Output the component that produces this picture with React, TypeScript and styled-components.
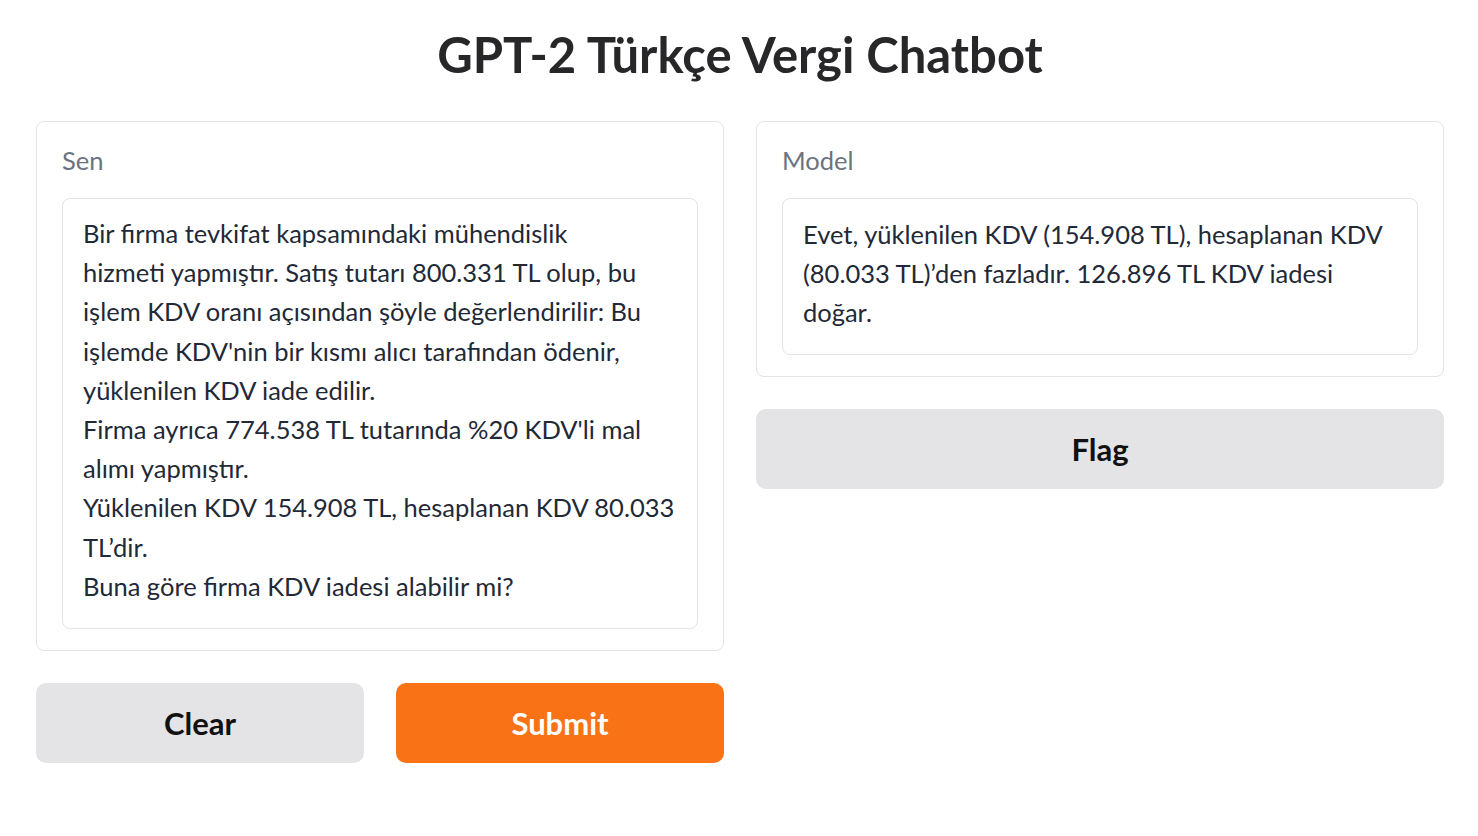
import React from "react";
import styled, { createGlobalStyle } from "styled-components";

const GlobalStyle = createGlobalStyle`
  html, body { margin: 0; padding: 0; background: #ffffff; }
  body { font-family: Lato, "Noto Sans", sans-serif; color: #1f2937; }
`;

const Page = styled.div`
  width: 1408px;
  margin-left: 36px;
  padding-top: 23px;
`;

const Title = styled.h1`
  margin: 0 0 36px 0;
  text-align: center;
  font-size: 49px;
  font-weight: 700;
  line-height: 62px;
  color: #27272a;
`;

const Columns = styled.div`
  display: grid;
  grid-template-columns: 1fr 1fr;
  gap: 32px;
  align-items: start;
`;

const Column = styled.div`
  display: flex;
  flex-direction: column;
  gap: 32px;
`;

const Panel = styled.div`
  border: 1px solid #e4e4e7;
  border-radius: 8px;
  padding: 20px 25px 21px 25px;
  display: flex;
  flex-direction: column;
  gap: 20px;
`;

const Label = styled.div`
  font-size: 25.5px;
  line-height: 36px;
  color: #6b7280;
`;

const TextBox = styled.div<{ $shift?: number }>`
  border: 1px solid #e4e4e7;
  border-radius: 8px;
  padding: ${(p) => 15 + (p.$shift ?? 0)}px 20px ${(p) => 22 - (p.$shift ?? 0)}px 20px;
  font-size: 25.5px;
  line-height: 39.2px;
  color: #1f2937;
  white-space: pre;
`;

const ButtonRow = styled.div`
  display: grid;
  grid-template-columns: 1fr 1fr;
  gap: 32px;
`;

const Button = styled.button<{ $primary?: boolean }>`
  height: 80px;
  border: none;
  border-radius: 10px;
  font-family: Lato, "Noto Sans", sans-serif;
  font-size: 31px;
  font-weight: 700;
  background: ${(p) => (p.$primary ? "#f97316" : "#e4e4e7")};
  color: ${(p) => (p.$primary ? "#ffffff" : "#111111")};
  cursor: pointer;
`;

const senText = [
  "Bir firma tevkifat kapsamındaki mühendislik",
  "hizmeti yapmıştır. Satış tutarı 800.331 TL olup, bu",
  "işlem KDV oranı açısından şöyle değerlendirilir: Bu",
  "işlemde KDV'nin bir kısmı alıcı tarafından ödenir,",
  "yüklenilen KDV iade edilir.",
  "Firma ayrıca 774.538 TL tutarında %20 KDV'li mal",
  "alımı yapmıştır.",
  "Yüklenilen KDV 154.908 TL, hesaplanan KDV 80.033",
  "TL’dir.",
  "Buna göre firma KDV iadesi alabilir mi?",
].join("\n");

const modelText = [
  "Evet, yüklenilen KDV (154.908 TL), hesaplanan KDV",
  "(80.033 TL)’den fazladır. 126.896 TL KDV iadesi",
  "doğar.",
].join("\n");

export default function App() {
  return (
    <>
      <GlobalStyle />
      <Page>
        <Title>GPT-2 Türkçe Vergi Chatbot</Title>
        <Columns>
          <Column>
            <Panel>
              <Label>Sen</Label>
              <TextBox>{senText}</TextBox>
            </Panel>
            <ButtonRow>
              <Button>Clear</Button>
              <Button $primary>Submit</Button>
            </ButtonRow>
          </Column>
          <Column>
            <Panel>
              <Label>Model</Label>
              <TextBox $shift={1}>{modelText}</TextBox>
            </Panel>
            <Button>Flag</Button>
          </Column>
        </Columns>
      </Page>
    </>
  );
}
